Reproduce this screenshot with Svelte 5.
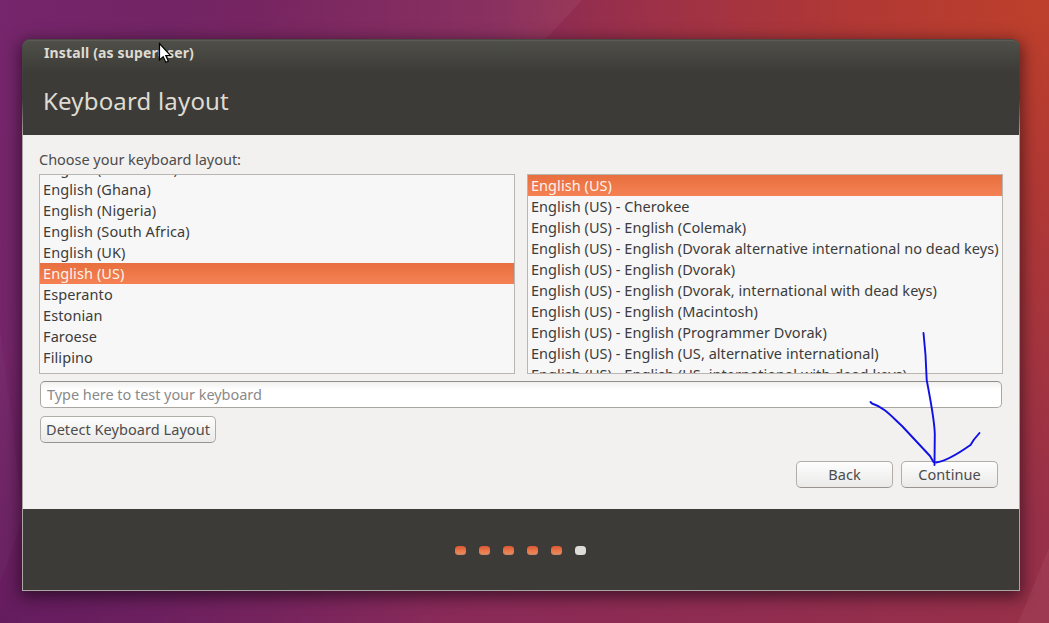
<script>
  const languages = [
    'English (Cameroon)', 'English (Ghana)', 'English (Nigeria)', 'English (South Africa)',
    'English (UK)', 'English (US)', 'Esperanto', 'Estonian', 'Faroese', 'Filipino', 'Finnish'
  ];
  const variants = [
    'English (US)',
    'English (US) - Cherokee',
    'English (US) - English (Colemak)',
    'English (US) - English (Dvorak alternative international no dead keys)',
    'English (US) - English (Dvorak)',
    'English (US) - English (Dvorak, international with dead keys)',
    'English (US) - English (Macintosh)',
    'English (US) - English (Programmer Dvorak)',
    'English (US) - English (US, alternative international)',
    'English (US) - English (US, international with dead keys)'
  ];
  let language = $state('English (US)');
  let variant = $state('English (US)');
  const step = 5;
</script>

<div class="desktop">
  <svg class="wallpaper" viewBox="0 0 1049 623" preserveAspectRatio="none">
    <polygon points="300,0 582,0 540,45 250,45" fill="url(#facet)" />
    <polygon points="0,330 12,420 23,520 0,583" fill="#fff" opacity="0.025" />
    <polygon points="1049,548 1049,623 1018,623" fill="#fff" opacity="0.05" />
    <defs>
      <linearGradient id="facet">
        <stop offset="0" stop-color="#fff" stop-opacity="0" />
        <stop offset="1" stop-color="#fff" stop-opacity="0.05" />
      </linearGradient>
    </defs>
  </svg>

  <main class="window">
    <header>
      <div class="titlebar">Install (as superuser)</div>
      <h1>Keyboard layout</h1>
    </header>

    <section class="content">
      <div class="prompt">Choose your keyboard layout:</div>
      <div class="lists">
        <div class="list">
          <ul class="scrolled">
            {#each languages as name}
              <li><button class="row" class:selected={name === language} onclick={() => (language = name)}>{name}</button></li>
            {/each}
          </ul>
        </div>
        <div class="list">
          <ul>
            {#each variants as name}
              <li><button class="row" class:selected={name === variant} onclick={() => (variant = name)}>{name}</button></li>
            {/each}
          </ul>
        </div>
      </div>
      <input class="entry" placeholder="Type here to test your keyboard" />
      <button class="btn detect">Detect Keyboard Layout</button>
      <div class="actions">
        <button class="btn">Back</button>
        <button class="btn">Continue</button>
      </div>
    </section>

    <footer>
      {#each Array(6) as _, i}
        <span class="dot" class:done={i < step}></span>
      {/each}
    </footer>
  </main>

  <svg class="overlay" viewBox="0 0 1049 623">
    <g fill="none" stroke="#1010e4" stroke-width="1.9" stroke-linecap="round" stroke-linejoin="round">
      <path d="M923.5 333 L925.5 355 L926.7 380 C931 403 934.500 420 934.800 434 L934.500 465" />
      <path d="M870.500 402 L872 403.500 C884 407 893 418 902 426 L930 456 L933.500 462" />
      <path d="M936 462.500 C948 461 962 451 970.500 445 L974 439.500 L979.500 433" />
    </g>
    <path d="M159.500 43.500 V60 L163.200 56.700 L165.800 62.300 L168.300 61.200 L165.800 55.500 H170.500 Z" fill="#fff" stroke="#000" stroke-width="1.2" />
  </svg>
</div>

<style>
  :global(body) { margin: 0; overflow: hidden; }
  .desktop {
    position: relative;
    box-sizing: border-box;
    width: 1049px;
    height: 623px;
    padding: 39px 29px 32px 22px;
    overflow: hidden;
    font-family: "Noto Sans", "Open Sans", sans-serif;
    font-size: 14.5px;
    color: #3c3c3c;
    background:
      radial-gradient(ellipse 560px 520px at 1049px 0, #be402b 0, rgba(182, 58, 48, 0.85) 35%, rgba(170, 50, 60, 0) 100%),
      radial-gradient(ellipse 420px 260px at 0 100%, rgba(98, 26, 92, 0.8) 0, rgba(98, 26, 92, 0) 100%),
      linear-gradient(100deg, #75266c 0, #722464 15%, #8a2a58 50%, #983048 100%);
  }
  .wallpaper, .overlay {
    position: absolute;
    inset: 0;
    width: 1049px;
    height: 623px;
    pointer-events: none;
  }
  .window {
    position: relative;
    display: flex;
    flex-direction: column;
    box-sizing: border-box;
    width: 998px;
    height: 552px;
    border: 1px solid transparent;
    border-radius: 8px 8px 0 0;
    background: linear-gradient(#3c3b37, #3c3b37) padding-box, linear-gradient(#4a4943 0, #3c3b37 60px, #aba5a4 96px) border-box;
    box-shadow: 0 4px 16px 2px rgba(10, 0, 10, 0.55);
  }
  header {
    flex: none;
    height: 95px;
    color: #dfdbd2;
    border-radius: 7px 7px 0 0;
    background: linear-gradient(#50504a 0, #3c3b37 32px);
    box-shadow: inset 0 1px #5c5c55;
  }
  .titlebar {
    height: 27px;
    padding-left: 21px;
    line-height: 26px;
    font-size: 14px;
    font-weight: 700;
    letter-spacing: 0.14px;
  }
  h1 {
    margin: 0;
    padding: 17px 0 0 20px;
    font-size: 24px;
    line-height: 34px;
    font-weight: 400;
    letter-spacing: 0.18px;
  }
  .content {
    flex: none;
    display: flex;
    flex-direction: column;
    box-sizing: border-box;
    height: 374px;
    padding: 14px 16px 0;
    background: #f2f1f0;
  }
  .prompt { height: 25px; line-height: 21px; color: #4c4c4c; letter-spacing: -0.03px; }
  .lists { display: flex; gap: 12px; height: 200px; letter-spacing: 0.05px; }
  .list {
    box-sizing: border-box;
    width: 476px;
    overflow: hidden;
    border: 1px solid #b9b5b1;
    background: #f7f7f7;
  }
  ul { margin: 0; padding: 0; list-style: none; }
  .scrolled { margin-top: -17px; letter-spacing: 0.1px; }
  li { height: 21px; }
  button, input { font: inherit; letter-spacing: inherit; color: inherit; }
  .row {
    display: block;
    width: 100%;
    height: 21px;
    padding: 0 3px;
    border: 0;
    background: none;
    line-height: 21px;
    text-align: left;
    white-space: nowrap;
  }
  .selected { color: #fbf3ec; background: linear-gradient(#e86f3e, #f58153); }
  .entry {
    box-sizing: border-box;
    width: 962px;
    height: 27px;
    margin: 7px 0 0 1px;
    padding: 0 6px 2px;
    border: 1px solid #aaa7a3;
    border-top-color: #918e8a;
    border-radius: 5px;
    background: linear-gradient(#f2f1f0, #fff 8px);
    letter-spacing: -0.05px;
  }
  .entry::placeholder { color: #8a8a8a; opacity: 1; }
  .btn {
    box-sizing: border-box;
    width: 97px;
    height: 27px;
    padding: 0 0 1px;
    border: 1px solid #b1ada9;
    border-bottom-color: #98948f;
    border-radius: 5px;
    color: #4c4c4c;
    background: linear-gradient(#fdfdfd, #ebeae9);
    line-height: 24px;
    white-space: nowrap;
    letter-spacing: 0.06px;
  }
  .detect { width: 176px; margin: 8px 0 0 1px; }
  .actions { display: flex; justify-content: flex-end; gap: 8px; padding: 18px 5px 0 0; }
  footer {
    flex: 1;
    display: flex;
    justify-content: center;
    gap: 13px;
    padding: 37px 0.5px 0 0;
    background: #3c3b37;
  }
  .dot {
    width: 11px;
    height: 9px;
    border-radius: 3.5px;
    background: #dedcd8;
  }
  .done { background: linear-gradient(#da5835, #ee8050 70%, #c98b70); }
</style>
